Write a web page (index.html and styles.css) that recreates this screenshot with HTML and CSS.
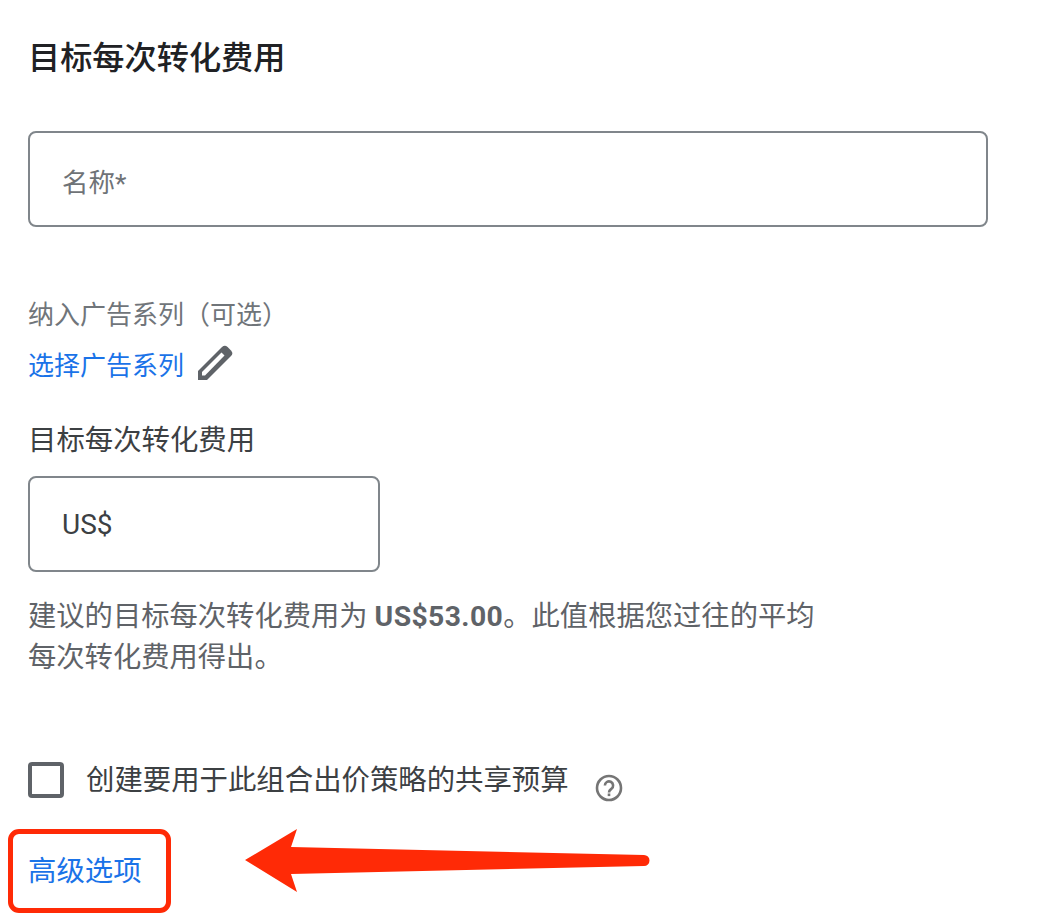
FILE: index.html
```html
<!DOCTYPE html>
<html lang="zh-CN">
<head>
    <meta charset="UTF-8">
    <meta name="viewport" content="width=device-width, initial-scale=1.0">
    <title>目标每次转化费用</title>
    <link rel="stylesheet" href="styles.css">
</head>
<body>
    <section class="strategy-form">
        <h1 class="form-title">目标每次转化费用</h1>

        <div class="text-field name-field">名称*</div>

        <div class="campaign-label">纳入广告系列（可选）</div>
        <div class="campaign-row">
            <a class="link" href="#">选择广告系列</a>
            <svg class="pencil-icon" width="38" height="38" viewBox="0 0 38 38">
                <path fill="#5f6368" d="M2 27L26 3a4 4 0 0 1 5.600 0l3.400 3.400a4 4 0 0 1 0 5.600L11 36H2z"/>
                <path fill="#fff" d="M6 28L25.500 8.500l3 3L9 31.500H6z"/>
            </svg>
        </div>

        <label class="cpa-label">目标每次转化费用</label>
        <div class="text-field cpa-field">US$</div>
        <p class="hint">建议的目标每次转化费用为 <b>US$53.00</b>。此值根据您过往的平均<br>每次转化费用得出。</p>

        <div class="budget-row">
            <span class="checkbox"></span>
            <span class="budget-text">创建要用于此组合出价策略的共享预算</span>
            <svg class="help-icon" width="28" height="28" viewBox="0 0 28 28">
                <circle cx="14" cy="14" r="12" fill="none" stroke="#757575" stroke-width="2.600"/>
                <path fill="none" stroke="#757575" stroke-width="2.600" d="M9.900 11.500a4.100 4.100 0 1 1 6.600 3.200c-1.500 1.200-2.500 1.900-2.500 3.700"/>
                <rect x="12.700" y="19.500" width="2.600" height="2.600" fill="#757575"/>
            </svg>
        </div>

        <a class="link advanced-link" href="#">高级选项</a>
    </section>

    <!-- 截图上的红色标注 -->
    <div class="mark-box"></div>
    <svg class="mark-arrow" width="410" height="70" viewBox="0 0 410 70">
        <path fill="#ff2a06" d="M0 32L52 1 46 19 399 27a5.500 5.500 0 0 1 0 11L46 46 52 64z"/>
    </svg>
</body>
</html>
```

FILE: styles.css
```css
body {
    margin: 0;
    background: #fff;
    color: #3c4043;
    font-family: Roboto, "Noto Sans CJK SC", sans-serif;
}
.strategy-form {
    padding: 36px 0 0 28px;
}
.form-title {
    margin: 0;
    font-size: 32.2px;
    line-height: 44px;
    font-weight: 500;
    color: #202124;
}
.text-field {
    box-sizing: border-box;
    height: 96px;
    padding-left: 32px;
    border: 2px solid #80868b;
    border-radius: 8px;
    font-size: 26.5px;
    line-height: 100px;
}
.name-field {
    width: 960px;
    margin-top: 51px;
    color: #6f7377;
}
.campaign-label {
    margin-top: 70px;
    font-size: 26px;
    line-height: 36px;
    color: #70757a;
}
.campaign-row {
    display: flex;
    align-items: center;
    gap: 12px;
    height: 38px;
    margin-top: 11px;
}
.link {
    font-size: 26px;
    color: #1a73e8;
    text-decoration: none;
}
.pencil-icon {
    flex: none;
}
.cpa-label {
    display: block;
    margin-top: 39px;
    font-size: 28.4px;
    line-height: 40px;
    color: #3c4043;
}
.cpa-field {
    width: 352px;
    margin-top: 15px;
    color: #3c4043;
    font-size: 28px;
    line-height: 94px;
}
.hint {
    margin: 24px 0 0;
    font-size: 28.3px;
    line-height: 41px;
    color: #5f6368;
}
.hint b {
    font-weight: 700;
    letter-spacing: 0.4px;
}
.budget-row {
    display: flex;
    align-items: flex-start;
    margin-top: 84px;
}
.checkbox {
    flex: none;
    box-sizing: border-box;
    width: 36px;
    height: 36px;
    border: 4px solid #5f6368;
    border-radius: 4px;
}
.budget-text {
    margin-left: 22px;
    font-size: 28.4px;
    line-height: 38px;
}
.help-icon {
    flex: none;
    margin: 12px 0 0 26px;
}
.advanced-link {
    display: block;
    margin-top: 50px;
    font-size: 28.4px;
    line-height: 40px;
}
.mark-box {
    position: absolute;
    left: 8px;
    top: 829px;
    box-sizing: border-box;
    width: 163px;
    height: 84px;
    border: 5px solid #ff2a06;
    border-radius: 11px;
}
.mark-arrow {
    position: absolute;
    left: 245px;
    top: 828px;
}
```
